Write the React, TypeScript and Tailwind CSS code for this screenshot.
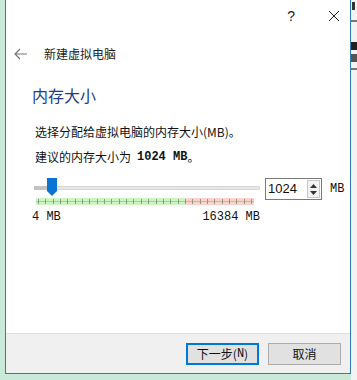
import React from "react";

const cjk = { fontFamily: '"Noto Sans CJK SC", "Noto Sans", sans-serif' };
const mono = { fontFamily: '"Liberation Mono", "Noto Sans CJK SC", monospace' };

function Ticks() {
  const ticks = [];
  for (let i = 0; i < 30; i++) ticks.push(i);
  return (
    <div className="relative h-[7px] w-[218px]">
      <div className="absolute left-0 top-0 h-[7px] w-[150px] bg-[#cdf5c2]" />
      <div className="absolute left-[150px] top-0 h-[7px] w-[68px] bg-[#fbd3cd]" />
      <div className="absolute left-0 top-[3px] h-px w-[218px] bg-[#9aa39a] opacity-60" />
      <div className="absolute inset-0 flex justify-between px-[2px]">
        {ticks.map((t) => (
          <div key={t} className="mt-[1px] h-[5px] w-px bg-[#8a9a8a]" />
        ))}
      </div>
    </div>
  );
}

export default function App() {
  return (
    <div className="relative h-[380px] w-[357px] overflow-hidden bg-[#c9ead8]">
      {/* right background strip */}
      <div className="absolute right-0 top-0 flex h-[380px] w-[6px] flex-col bg-[#f3f3f3]">
        <div className="ml-[1px] mt-[2px] h-[8px] w-[3px] bg-[#333]" />
        <div className="mt-[10px] h-[2px] bg-[#777]" />
        <div className="mt-[20px] h-[8px] bg-[#222]" />
        <div className="mt-[4px] h-[8px] bg-[#555]" />
        <div className="mt-[6px] h-[2px] bg-[#777]" />
      </div>
      {/* window */}
      <div className="absolute left-[5px] top-0 flex h-[374px] w-[346px] flex-col border border-t-0 border-[#2f7cb6] bg-white">
        {/* title bar */}
        <div className="flex h-[30px] items-center justify-end pr-[10px] pt-[2px] text-[#222]">
          <span className="mr-[33px] text-[14px]" style={{ fontFamily: '"Liberation Sans", sans-serif' }}>?</span>
          <svg width="12" height="12" viewBox="0 0 12 12">
            <path d="M1 1 L11 11 M11 1 L1 11" stroke="#222" strokeWidth="1" />
          </svg>
        </div>
        {/* nav row */}
        <div className="mt-[15px] flex items-center pl-[8px]">
          <svg width="14" height="12" viewBox="0 0 14 12">
            <path d="M1 6 H13 M6 1 L1 6 L6 11" stroke="#777" strokeWidth="1.2" fill="none" />
          </svg>
          <span className="ml-[16px] text-[12px] text-[#222]" style={cjk}>新建虚拟电脑</span>
        </div>
        {/* content */}
        <div className="flex flex-1 flex-col pl-[26px]">
          <div className="mt-[22px] text-[16px] leading-[20px] text-[#1e3d84]" style={cjk}>内存大小</div>
          <div className="mt-[19px] pl-[3px] text-[12px] leading-[16px] text-[#111]" style={cjk}>
            选择分配给虚拟电脑的内存大小(MB)。
          </div>
          <div className="mt-[9px] flex items-center pl-[3px] text-[12px] leading-[16px] text-[#111]" style={cjk}>
            建议的内存大小为
            <b className="ml-[6px] text-[12px]" style={mono}>1024 MB</b>
            <span>。</span>
          </div>
          {/* slider row */}
          <div className="mt-[13px] flex items-start">
            <div className="flex w-[232px] flex-col">
              <div className="relative h-[20px] w-[230px]">
                <div className="absolute left-[2px] top-[8px] h-[4px] w-[226px] rounded-[1px] border border-[#d6d6d6] bg-[#e7e7e7]" />
                <div className="absolute left-[2px] top-[8px] h-[4px] w-[14px] bg-[#c3c3c3]" />
                <svg className="absolute left-[14px] top-0" width="12" height="19" viewBox="0 0 12 19">
                  <path d="M1 0 H11 V13 L6 18 L1 13 Z" fill="#0a74d4" />
                </svg>
              </div>
              <div className="ml-[4px]">
                <Ticks />
              </div>
              <div className="mt-[5px] flex w-[228px] justify-between text-[12px] leading-[14px] text-[#111]" style={mono}>
                <span>4 MB</span>
                <span>16384 MB</span>
              </div>
            </div>
            <div className="ml-[1px] flex h-[22px] w-[57px] items-center border border-[#7a7a7a] bg-white">
              <span className="flex-1 pl-[2px] text-[13px] text-[#111]" style={{ fontFamily: '"Liberation Sans", sans-serif' }}>1024</span>
              <div className="mr-[1px] flex h-[18px] w-[13px] flex-col items-center justify-center gap-[3px] border border-[#c8c8c8] bg-[#f2f2f2]">
                <svg width="7" height="4" viewBox="0 0 7 4"><path d="M0 4 L3.5 0 L7 4 Z" fill="#333" /></svg>
                <svg width="7" height="4" viewBox="0 0 7 4"><path d="M0 0 L3.5 4 L7 0 Z" fill="#333" /></svg>
              </div>
            </div>
            <span className="ml-[8px] mt-[4px] text-[12px] leading-[14px] text-[#111]" style={mono}>MB</span>
          </div>
        </div>
        {/* bottom bar */}
        <div className="flex h-[40px] items-center justify-end gap-[9px] border-t border-[#dfdfdf] bg-[#f0f0f0] pr-[9px]">
          <button className="flex h-[22px] w-[73px] items-center justify-center border-2 border-[#0078d7] bg-[#e1e1e1] text-[12px] text-[#111]" style={cjk}>
            下一步(<span style={mono}>N</span>)
          </button>
          <button className="flex h-[22px] w-[73px] items-center justify-center border border-[#adadad] bg-[#e1e1e1] text-[12px] text-[#111]" style={cjk}>
            取消
          </button>
        </div>
      </div>
    </div>
  );
}
